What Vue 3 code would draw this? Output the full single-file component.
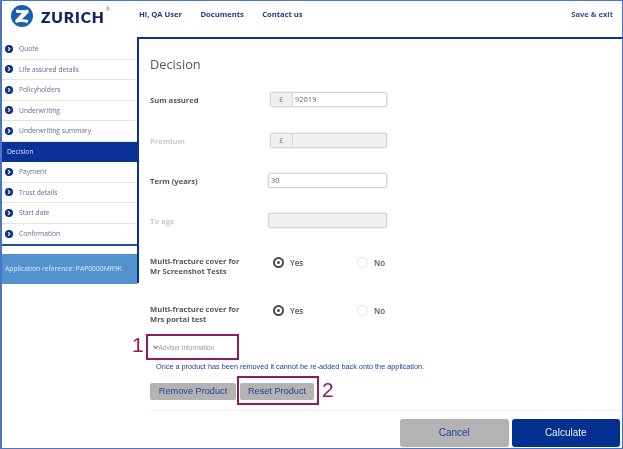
<script setup>
const steps = [
  { label: 'Quote' },
  { label: 'Life assured details' },
  { label: 'Policyholders' },
  { label: 'Underwriting' },
  { label: 'Underwriting summary' },
  { label: 'Decision', active: true },
  { label: 'Payment' },
  { label: 'Trust details' },
  { label: 'Start date' },
  { label: 'Confirmation' }
]
const people = ['Mr Screenshot Tests', 'Mrs portal test']
</script>

<template>
  <div class="frame">
    <header class="top">
      <div class="logo">
        <svg class="mark" viewBox="0 0 22 22" width="22" height="22">
          <circle cx="11" cy="11" r="11" fill="#1560b0" />
          <path d="M5.2 4.6C8.8 5.6 13 5.5 17 4.4L17.8 7.2L11 14.3C13.4 14.1 15.6 14.5 17.4 15.2L16.6 18C13 16.8 9 16.8 4.8 18L4.2 15.2L11 8.1C9 8.2 7 7.9 4.9 7.4Z" fill="#fff" />
        </svg>
        <span class="word">ZURICH</span><span class="reg">®</span>
      </div>
      <nav class="nav">
        <a>Hi, QA User</a>
        <a>Documents</a>
        <a>Contact us</a>
      </nav>
      <a class="save">Save &amp; exit</a>
    </header>

    <div class="body">
      <aside class="side">
        <ul class="steps">
          <li v-for="s in steps" :key="s.label" :class="['step', { active: s.active }]">
            <svg v-if="!s.active" class="dot" viewBox="0 0 8 8" width="8" height="8">
              <circle cx="4" cy="4" r="4" fill="#0f2a8c" />
              <path d="M3 2.1L5 4L3 5.9" fill="none" stroke="#fff" stroke-width="1.1" />
            </svg>
            <span>{{ s.label }}</span>
          </li>
        </ul>
        <div class="ref">Application reference: PAP0000MR9K</div>
      </aside>

      <main class="main">
        <h1 class="title">Decision</h1>

        <div class="row">
          <label class="lab">Sum assured</label>
          <div class="ctl pre">
            <span class="pound">£</span><span class="val">92019</span>
          </div>
        </div>
        <div class="row">
          <label class="lab off">Premium</label>
          <div class="ctl pre dis">
            <span class="pound">£</span><span class="val"></span>
          </div>
        </div>
        <div class="row">
          <label class="lab">Term (years)</label>
          <div class="ctl wide"><span class="val">30</span></div>
        </div>
        <div class="row">
          <label class="lab off">To age</label>
          <div class="ctl wide dis"><span class="val"></span></div>
        </div>

        <div v-for="(p, i) in people" :key="p" :class="['multi', 'multi' + i]">
          <label class="lab">Multi-fracture cover for<br />{{ p }}</label>
          <div class="opt yes"><span class="radio on"></span>Yes</div>
          <div class="opt"><span class="radio"></span>No</div>
        </div>

        <div class="adviser"><span class="chev"></span>Adviser information</div>
        <p class="warn">Once a product has been removed it cannot be re-added back onto the application.</p>
        <div class="prod">
          <button class="grey rm">Remove Product</button>
          <button class="grey rs">Reset Product</button>
        </div>
        <div class="foot">
          <button class="big cancel">Cancel</button>
          <button class="big calc">Calculate</button>
        </div>
      </main>
    </div>

    <div class="mark-box b1"></div>
    <span class="num n1">1</span>
    <div class="mark-box b2"></div>
    <span class="num n2">2</span>
  </div>
</template>

<style>
html, body { margin: 0; background: #fff; }
</style>

<style scoped>
.frame {
  position: relative;
  box-sizing: border-box;
  width: 623px;
  height: 449px;
  overflow: hidden;
  background: #fff;
  border: 1px solid #4a74c9;
  border-left-width: 2px;
  font-family: "Open Sans", sans-serif;
  filter: blur(0.35px);
}
.top {
  display: flex;
  align-items: flex-start;
  height: 36px;
}
.logo {
  display: flex;
  align-items: flex-start;
  width: 137px;
  padding: 4px 0 0 9px;
  box-sizing: border-box;
  color: #12245f;
}
.word {
  margin: 3px 0 0 8px;
  font: 800 15.5px/18px Lato, sans-serif;
  letter-spacing: 0.9px;
}
.reg { font-size: 5px; line-height: 8px; color: #777; margin-left: 1px; }
.nav {
  display: flex;
  gap: 18.5px;
  padding-top: 8px;
  font-size: 7.6px;
  font-weight: 700;
  line-height: 11px;
  color: #1d3a8a;
}
.save {
  margin-left: auto;
  padding: 8px 9px 0 0;
  font-size: 7.6px;
  font-weight: 700;
  line-height: 11px;
  color: #3450a0;
}
.body { display: flex; align-items: flex-start; }
.side { width: 135px; flex: none; padding-top: 2px; }
.steps {
  margin: 0;
  padding: 0;
  list-style: none;
  border-bottom: 2px solid #23509f;
}
.step {
  box-sizing: border-box;
  display: flex;
  align-items: center;
  gap: 6px;
  height: 20.5px;
  padding-left: 3px;
  font-size: 6.7px;
  color: #5e6b95;
  border-bottom: 1px solid #e8e4d8;
}
.step:last-child { border-bottom: 0; }
.step.active {
  background: #0a3195;
  color: #d6e0f5;
  padding-left: 5px;
  border-bottom: 0;
}
.ref {
  box-sizing: border-box;
  height: 30px;
  margin-top: 8px;
  padding: 9px 0 0 3px;
  background: #5393cd;
  color: #dce9f6;
  font-size: 6.75px;
  line-height: 11px;
  white-space: nowrap;
}
.main {
  flex: 1;
  position: relative;
  height: 410px;
  box-sizing: border-box;
  border-top: 2px solid #0a3195;
  padding: 0 0 0 13px;
}
.main::before {
  content: "";
  position: absolute;
  left: 0;
  top: 0;
  width: 2px;
  height: 244px;
  background: #0a3195;
}
.title {
  margin: 0;
  padding-top: 16px;
  height: 25px;
  font-size: 12.8px;
  line-height: 18px;
  font-weight: 500;
  color: #5a5552;
}
.row {
  display: flex;
  align-items: center;
  height: 40.4px;
}
.lab {
  width: 118px;
  flex: none;
  font-size: 7.6px;
  line-height: 10px;
  font-weight: 700;
  color: #5a5552;
}
.lab.off { color: #c9c9c9; }
.ctl {
  box-sizing: border-box;
  display: flex;
  height: 15px;
  margin-top: -1px;
  border: 1px solid #d6d6d6;
  border-radius: 2px;
  box-shadow: 0 0 0 0.5px #e4e4e4;
  font-size: 7.5px;
  line-height: 13px;
  color: #666;
}
.pre { width: 117px; margin-left: 2px; }
.wide { width: 119px; }
.pound {
  width: 21px;
  flex: none;
  text-align: center;
  background: #efefef;
  border-right: 1px solid #d6d6d6;
  color: #888;
}
.val { padding-left: 2px; flex: 1; }
.dis { background: #efefef; }
.multi {
  display: flex;
  align-items: flex-start;
  height: 48px;
}
.multi0 { margin-top: 14px; }
.multi1 { height: 38px; }
.multi .lab { width: 123px; }
.opt {
  display: flex;
  align-items: center;
  width: 84px;
  height: 11px;
  margin-top: 1px;
  font-size: 8px;
  font-weight: 600;
  color: #5a5552;
}
.radio {
  box-sizing: border-box;
  width: 11px;
  height: 11px;
  margin-right: 6px;
  border-radius: 50%;
  border: 1px solid #e2e2e2;
}
.radio.on {
  border: 2px solid #4f4a47;
  position: relative;
}
.radio.on::after {
  content: "";
  position: absolute;
  left: 2px;
  top: 2px;
  width: 3px;
  height: 3px;
  border-radius: 50%;
  background: #4f4a47;
}
.adviser {
  display: flex;
  align-items: center;
  height: 11px;
  padding-left: 4px;
  font: 6.5px/11px "Liberation Sans", sans-serif;
  color: #999;
}
.chev {
  width: 2.5px;
  height: 2.5px;
  margin: -2px 1px 0 0;
  border-right: 1px solid #666;
  border-bottom: 1px solid #666;
  transform: rotate(45deg);
}
.warn {
  margin: 8px 0 0 6px;
  font: 7.3px/11px "Liberation Sans", sans-serif;
  color: #1d3f99;
  white-space: nowrap;
}
.prod { display: flex; gap: 4px; margin-top: 11px; }
.grey {
  box-sizing: border-box;
  height: 17px;
  padding: 0;
  border: 0;
  border-radius: 2px;
  background: #b3b3b3;
  color: #23429a;
  font: 9.2px "Liberation Sans", sans-serif;
}
.rm { width: 86px; }
.rs { width: 74px; }
.foot {
  display: flex;
  justify-content: flex-end;
  gap: 3px;
  margin-top: 10px;
  padding: 8px 2px 0 0;
  border-top: 1px solid #f0f0f0;
}
.big {
  box-sizing: border-box;
  width: 108.5px;
  height: 28px;
  padding: 0;
  border: 0;
  border-radius: 3px;
  font: 10px "Liberation Sans", sans-serif;
}
.cancel { background: #b3b3b3; color: #23429a; }
.calc { background: #02308f; color: #e4ebf8; }
.mark-box {
  position: absolute;
  box-sizing: border-box;
  border: 2px solid #8f1a60;
}
.b1 { left: 144px; top: 333px; width: 93px; height: 26px; }
.b2 { left: 235px; top: 375px; width: 82px; height: 29px; }
.num {
  position: absolute;
  font: 21px/24px "Liberation Sans", sans-serif;
  color: #8f1a60;
}
.n1 { left: 130px; top: 332px; }
.n2 { left: 320px; top: 377px; }
</style>
